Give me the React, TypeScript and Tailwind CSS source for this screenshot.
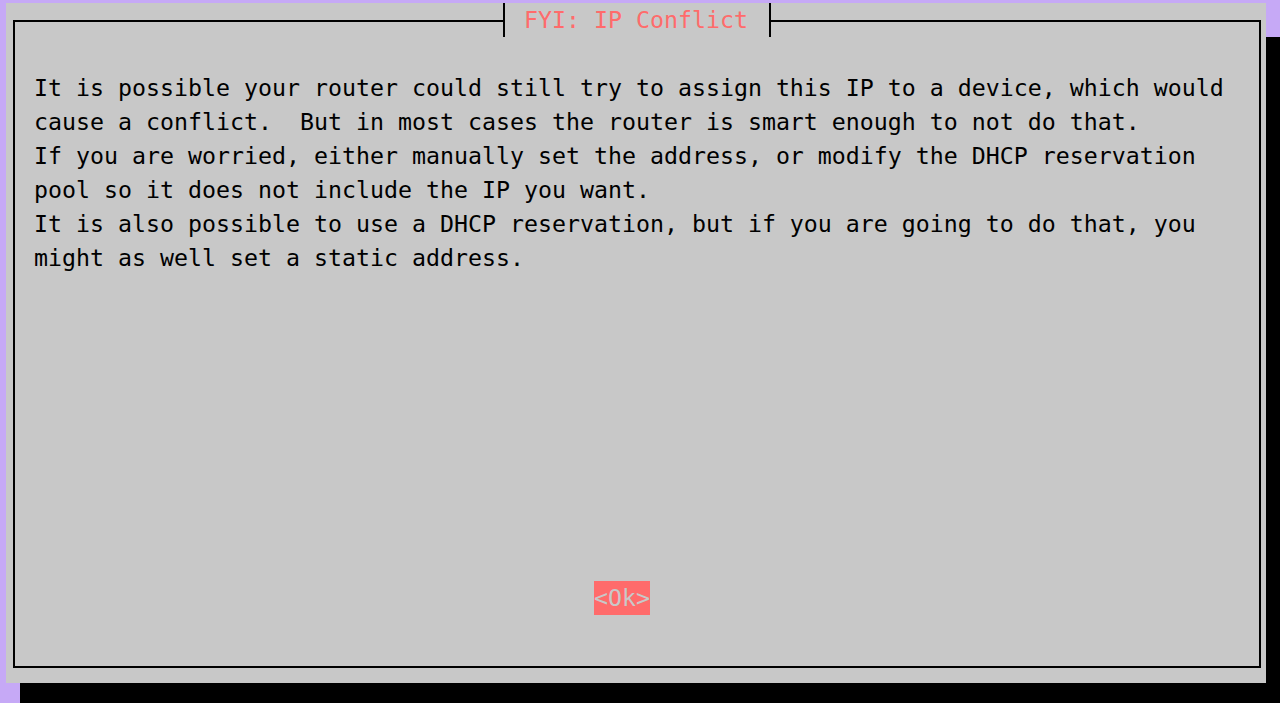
import React from "react";

const lines = [
  "It is possible your router could still try to assign this IP to a device, which would",
  "cause a conflict.  But in most cases the router is smart enough to not do that.",
  "If you are worried, either manually set the address, or modify the DHCP reservation",
  "pool so it does not include the IP you want.",
  "It is also possible to use a DHCP reservation, but if you are going to do that, you",
  "might as well set a static address.",
];

export default function App() {
  return (
    <div
      className="w-[1280px] h-[703px] overflow-hidden bg-[#c6a9f6] pt-[3px] pl-[6px]"
      style={{ fontFamily: '"DejaVu Sans Mono", "Liberation Mono", monospace' }}
    >
      <div className="w-[1260px] h-[680px] bg-[#c8c8c8] shadow-[14px_34px_0_0_#000] pt-[17px] pl-[7px]">
        <div className="relative w-[1248px] h-[648px] border-2 border-black flex flex-col text-[23.25px] leading-[34px]">
          <div className="absolute left-[488px] top-[-19px] h-[34px] flex items-stretch bg-[#c8c8c8]">
            <div className="w-[2px] bg-black" />
            <div className="w-[264px] text-[#ff6b6b] whitespace-pre pl-[19px]">FYI: IP Conflict</div>
            <div className="w-[2px] bg-black" />
          </div>
          <div className="pt-[49px] pl-[19px] text-black whitespace-pre">
            {lines.map((l, i) => (
              <div key={i} className="h-[34px]">{l}</div>
            ))}
          </div>
          <div className="mt-auto mb-[51px] flex pl-[579px]">
            <div className="w-[56px] h-[34px] bg-[#ff6b6b] text-[#c8c8c8] whitespace-pre">{"<Ok>"}</div>
          </div>
        </div>
      </div>
    </div>
  );
}
